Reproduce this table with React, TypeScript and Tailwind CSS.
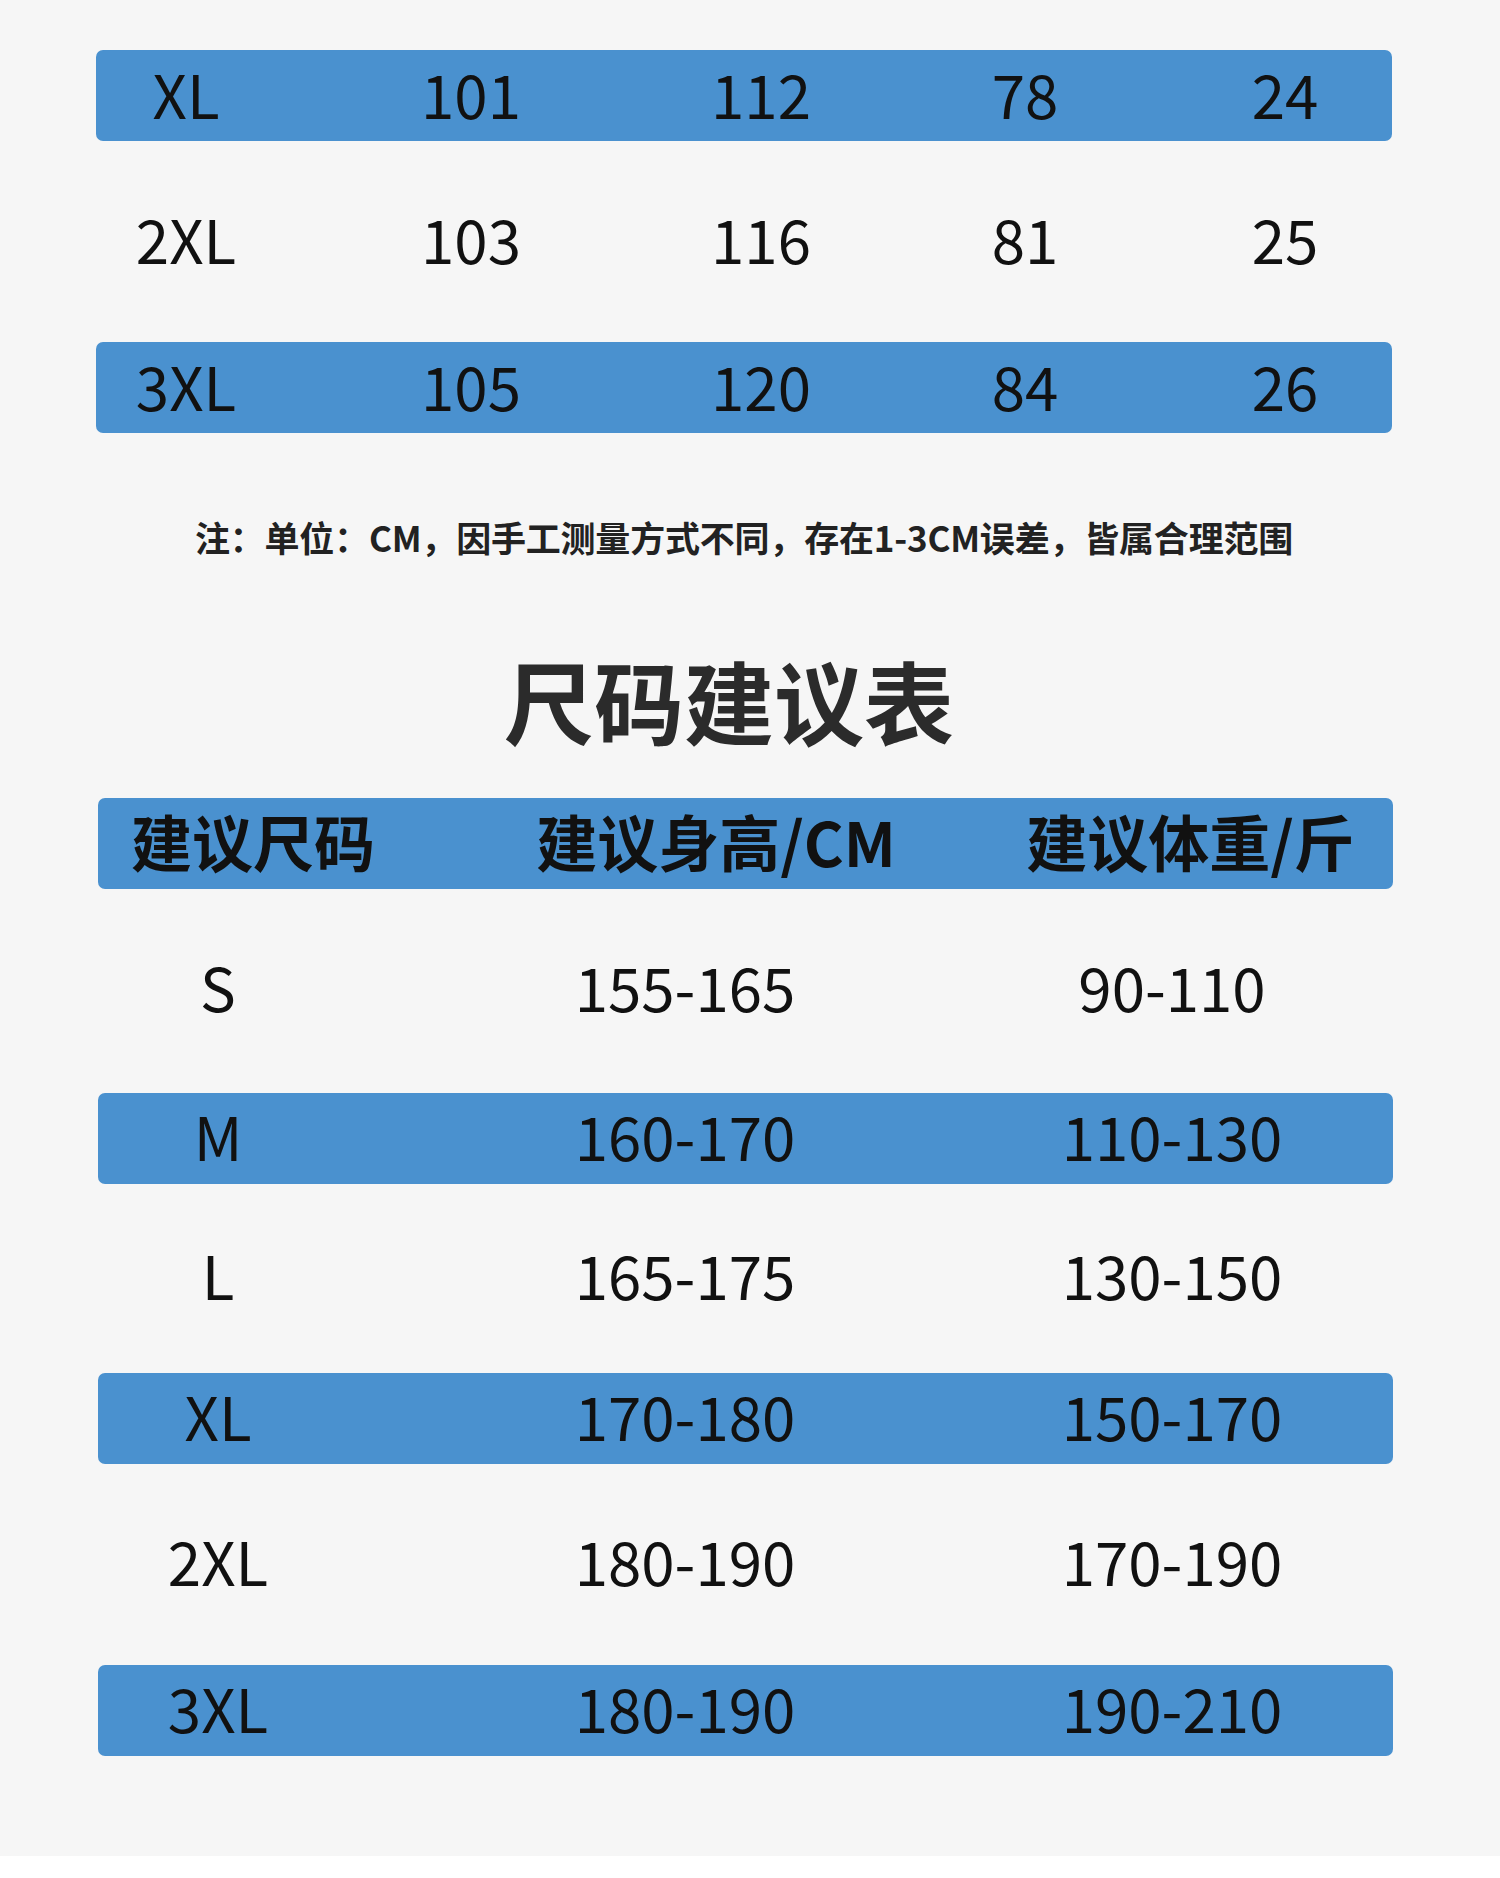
import React from "react";

const FONT = { fontFamily: '"Noto Sans CJK SC", "Noto Sans", sans-serif' };

const topRows = [
  ["XL", "101", "112", "78", "24"],
  ["2XL", "103", "116", "81", "25"],
  ["3XL", "105", "120", "84", "26"],
];
const topWidths = ["w-[180px]", "w-[390px]", "w-[190px]", "w-[338px]", "w-[182px]"];

const sugRows = [
  ["S", "155-165", "90-110"],
  ["M", "160-170", "110-130"],
  ["L", "165-175", "130-150"],
  ["XL", "170-180", "150-170"],
  ["2XL", "180-190", "170-190"],
  ["3XL", "180-190", "190-210"],
];
const sugWidths = ["w-[240px]", "w-[694px]", "w-[280px]"];
const plainHeights = ["h-[204px] pb-[11px]", "h-[189px] pb-[9px]", "h-[201px] pb-[9px]"];

export default function App() {
  return (
    <div className="w-[1500px] h-[1878px] bg-white" style={FONT}>
      <div className="h-[1856px] bg-[#f6f6f6] pt-[50px] text-[#111]">
        {/* top measurement table (continued) */}
        <div className="ml-[96px] w-[1296px] flex flex-col">
          {topRows.map((r, i) => (
            <div
              key={i}
              className={
                i % 2 === 0
                  ? "h-[91px] pb-[6px] flex items-center bg-[#4a91cf] rounded-[7px]"
                  : "h-[201px] pb-[8px] flex items-center"
              }
            >
              {r.map((c, j) => (
                <div key={j} className={`${topWidths[j]} text-center text-[60px] leading-none`}>
                  {c}
                </div>
              ))}
            </div>
          ))}
        </div>

        {/* note */}
        <div className="mt-[79px] ml-[96px] w-[1296px] text-center text-[35px] leading-[50px] font-bold text-[#222] tracking-[-0.2px]">
          注：单位：CM，因手工测量方式不同，存在1-3CM误差，皆属合理范围
        </div>

        {/* title */}
        <div className="mt-[92px] ml-[96px] w-[1296px] pr-[30px] text-center text-[90px] leading-none font-bold text-[#2b2b2b]">
          尺码建议表
        </div>

        {/* suggestion table */}
        <div className="mt-[54px] ml-[98px] w-[1295px] flex flex-col">
          <div className="h-[91px] pb-[6px] flex items-center bg-[#4a91cf] rounded-[7px] text-[61px] font-bold leading-none">
            <div className="w-[310px] text-center">建议尺码</div>
            <div className="w-[616px] text-center">建议身高/CM</div>
            <div className="w-[333px] text-center">建议体重/斤</div>
          </div>
          {sugRows.map((r, i) => (
            <div
              key={i}
              className={
                i % 2 === 1
                  ? "h-[91px] pb-[8px] flex items-center bg-[#4a91cf] rounded-[7px]"
                  : `${plainHeights[i / 2]} flex items-center`
              }
            >
              {r.map((c, j) => (
                <div key={j} className={`${sugWidths[j]} text-center text-[60px] leading-none`}>
                  {c}
                </div>
              ))}
            </div>
          ))}
        </div>
      </div>
    </div>
  );
}
